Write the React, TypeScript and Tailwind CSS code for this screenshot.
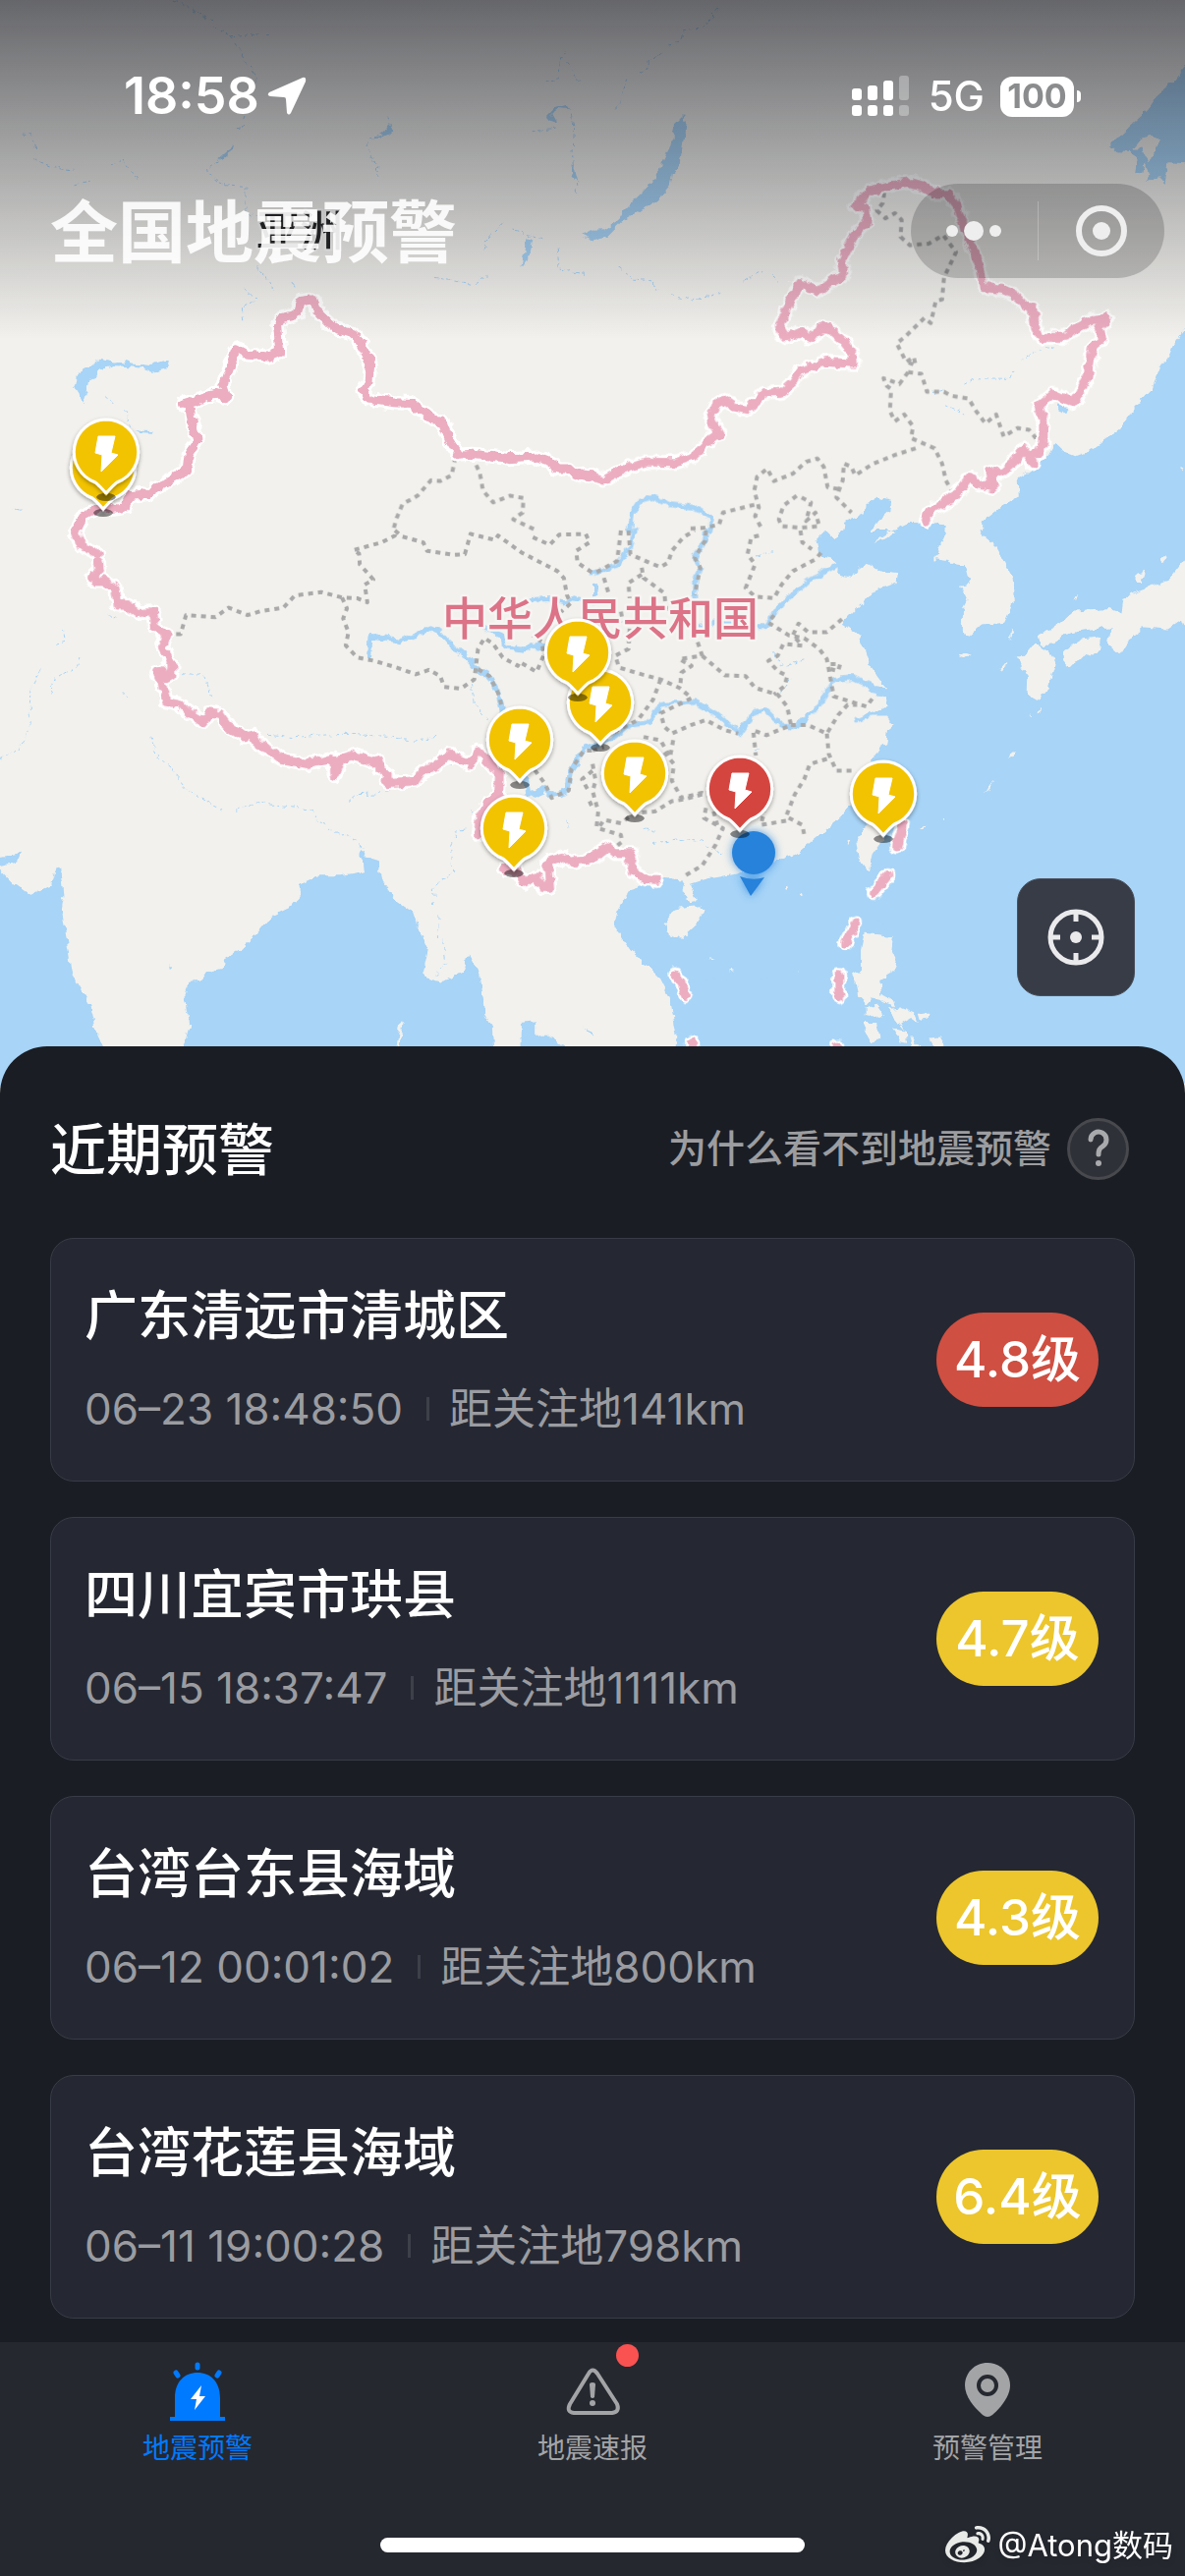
import { useState } from 'react'
import { FaWeibo } from 'react-icons/fa'

type Tile = {
  x: number
  y: number
  water: string[]
  islands: string[]
  rivers: string[]
  streams: string[]
  provinces: string[]
  border: string[]
}

// Each tile is drawn on its own 1568 x 1568 grid and scaled down to 603 x 540
const TILES: Tile[] = [
  {
    x: 0,
    y: 0,
    water: [
      'M197 1140 L205 1103 L230 1088 L262 1062 L300 1070 L325 1068 L350 1076 L400 1080 L420 1072 L450 1066 L446 1085 L405 1097 L360 1085 L300 1080 L265 1090 L255 1110 L235 1120 L230 1160 L222 1188 L205 1158Z',
      'M356 1270 L408 1272 L400 1280 L365 1277Z',
      'M622 428 L618 442 L590 465 L572 474 L596 450Z',
      'M1395 705 L1410 712 L1395 770 L1382 790 L1390 740Z',
      'M1568 680 L1540 692 L1568 708Z',
      'M1448 340 L1465 320 L1500 310 L1508 322 L1480 320 L1460 335 L1475 365 L1455 358Z',
      'M1508 482 L1522 500 L1530 540 L1515 515Z',
      'M1030 368 L1042 388 L1005 408 L975 412 L1010 400Z',
      'M35 1508 L58 1502 L48 1510Z',
    ],
    islands: [],
    rivers: [],
    streams: [
      'M460 0 L490 15 L525 40 L545 50 L575 85 L610 110 L635 150 L645 175 L665 200 L680 240',
      'M610 110 L660 103 L715 100',
      'M650 345 L640 375 L615 382',
      'M590 465 L545 500 L548 517 L600 545 L650 550 L650 620 L680 640',
      'M60 398 L85 400 L92 440 M90 470 L130 490 L195 503 M200 545 L240 538 M295 490 L325 470 L365 532',
      'M1030 345 L1038 380 L980 410 L970 435 L992 470 L998 495 L995 520',
      'M1495 148 L1482 185 L1480 235 L1440 240 M1500 185 L1535 238',
      'M1410 388 L1480 380 M1508 320 L1520 380 L1515 470 L1525 570',
      'M675 790 L700 815 L725 855 M645 855 L678 887 L640 910 L645 950 M775 840 L785 855',
      'M1150 820 L1250 840 L1290 815 M1280 735 L1300 690 L1330 660 M1360 680 L1435 708 M1475 740 L1480 795 L1550 812',
      'M275 1172 L300 1192 M330 1215 L345 1265',
    ],
    provinces: [
      'M1205 1352 L1195 1405 L1165 1422 L1140 1420 L1105 1465 L1065 1490 L1050 1530 L1040 1568',
      'M1250 1348 L1270 1400 L1278 1450 L1305 1485 L1350 1465 L1385 1472 L1383 1515 L1358 1535 L1420 1568',
    ],
    border: [
      'M200 1568 L210 1545 L220 1525 L250 1508 L275 1490 L300 1505 L330 1500 L345 1465 L390 1460 L440 1425 L495 1390 L500 1340 L522 1305 L508 1250 L503 1210 L485 1195 L570 1165 L600 1175 L590 1140 L610 1080 L625 1030 L655 1048 L710 1055 L740 1040 L735 960 L745 940 L785 930 L795 890 L830 885 L840 920 L885 970 L930 985 L950 1005 L980 1070 L975 1130 L962 1155 L975 1180 L1040 1190 L1090 1192 L1150 1240 L1170 1245 L1190 1300 L1215 1345 L1250 1342 L1350 1355 L1420 1350 L1455 1365 L1475 1385 L1500 1385 L1540 1405 L1568 1408',
    ],
  },
  {
    x: 603,
    y: 0,
    water: [
      'M242 340 L247 360 L240 420 L230 490 L210 510 L205 550 L175 590 L140 610 L110 635 L80 655 L40 700 L0 710 L0 682 L30 680 L65 655 L80 625 L130 570 L165 530 L185 480 L215 410 L215 370Z',
      'M1640 198 L1568 198 L1530 250 L1500 275 L1470 325 L1425 370 L1370 430 L1385 448 L1430 450 L1440 465 L1436 515 L1455 510 L1460 480 L1478 520 L1465 540 L1500 522 L1515 540 L1525 480 L1568 483 L1640 483Z',
      'M1640 975 L1568 970 L1540 1010 L1528 1045 L1505 1080 L1480 1150 L1420 1220 L1400 1265 L1370 1290 L1310 1335 L1280 1348 L1240 1330 L1222 1312 L1205 1345 L1170 1380 L1125 1415 L1128 1465 L1080 1500 L1030 1545 L1030 1568 L1640 1568Z',
      'M663 1568 L668 1545 L720 1515 L722 1490 L755 1468 L790 1478 L790 1505 L755 1540 L735 1568Z',
      'M790 1568 L830 1545 L880 1545 L935 1552 L935 1568Z',
      'M1230 1198 L1255 1205 L1243 1222 L1230 1212Z',
    ],
    islands: [
      'M1450 410 L1480 400 L1498 412 L1490 440 L1480 470 L1470 480 L1455 440 L1430 440Z',
      'M1556 1380 L1564 1382 L1558 1392Z',
    ],
    rivers: ['M100 1568 L105 1520 L130 1478 L160 1470 L205 1492 L270 1500 L315 1530 L312 1568'],
    streams: [
      'M335 30 L285 85 L240 92 L225 128 L205 130 M182 155 L152 182 L150 195 L115 215 M90 235 L75 300 L60 318',
      'M70 790 L110 825 L160 830 L168 860 M210 870 L265 888 L345 865 M400 830 L450 800 M475 815 L490 830',
      'M985 1135 L1010 1120 L1105 1122 L1115 1098 M1135 1065 L1180 1035 L1225 1028 L1240 1015',
      'M935 1195 L985 1225 M900 1160 L935 1152',
    ],
    provinces: [
      'M772 570 L768 600 L752 622 L775 645 L800 630 L818 650 L815 700 L840 725 L890 720 L928 695 L962 745 L930 820 L925 885 L908 890 L895 955 L878 940 L830 992 L805 1015 L830 1070 L850 1055 L855 1080 L828 1068',
      'M835 1100 L870 1105 L885 1158 L930 1158 L950 1170 L995 1178 L1015 1215 L1040 1252 L1068 1225 L1088 1290 L1125 1265 L1155 1270 L1180 1305 L1195 1298',
      'M835 1100 L812 1135 L770 1118 L778 1140 L790 1150 L787 1215 L800 1245 L825 1225 L848 1260 L843 1295 L905 1325 L925 1370 L935 1420 L950 1450',
      'M855 1325 L800 1345 L740 1372 L695 1405 L685 1380 L665 1370 L662 1420 L645 1470 L685 1515',
      'M650 1445 L622 1440 L612 1380 L595 1355 L565 1365 L530 1400 L480 1422 L462 1385 L435 1410 L428 1450 L440 1500 L430 1525 L450 1568',
      'M428 1492 L345 1515 L335 1550 L300 1560 L255 1562',
      'M540 1465 L505 1495 L493 1535 L500 1555 L550 1560 L600 1555 L590 1515 L565 1540 L578 1485 L545 1466',
    ],
    border: [
      'M0 1408 L30 1420 L75 1390 L140 1365 L220 1367 L265 1350 L300 1310 L335 1280 L312 1240 L330 1190 L350 1183 L375 1202 L410 1210 L455 1162 L500 1160 L530 1130 L550 1095 L580 1085 L620 1070 L690 1075 L688 1045 L665 1010 L640 985 L625 970 L600 970 L580 1000 L550 980 L512 998 L495 968 L510 920 L548 835 L600 860 L640 825 L665 815 L660 770 L690 700 L728 655 L722 615 L697 608 L730 565 L790 548 L845 540 L870 548 L905 572 L940 572 L965 610 L1000 720 L1025 790 L1035 850 L1085 855 L1115 870 L1145 905 L1165 910 L1172 970 L1185 997 L1250 997 L1270 975 L1325 945 L1362 940 L1340 970 L1350 1000 L1325 1025 L1310 1110 L1290 1160 L1275 1190 L1220 1165 L1180 1200 L1193 1240 L1193 1310 L1180 1340 L1160 1345 L1168 1370 L1140 1325 L1120 1360 L1085 1395 L1055 1395 L1062 1440 L1025 1432 L998 1410 L960 1465 L910 1500 L885 1520 L880 1540',
    ],
  },
  {
    x: 0,
    y: 540,
    water: [
      'M-60 1000 L0 1000 L40 1045 L80 1077 L135 1050 L150 995 L162 1000 L170 1075 L163 1120 L175 1200 L190 1310 L210 1350 L240 1405 L255 1480 L275 1530 L275 1640 L-60 1640Z',
      'M485 1568 L485 1530 L502 1460 L490 1370 L500 1335 L530 1332 L545 1305 L590 1295 L592 1268 L640 1235 L665 1210 L720 1140 L775 1110 L795 1080 L795 1045 L845 1020 L900 1020 L965 1008 L960 970 L950 960 L955 940 L970 965 L1000 975 L1015 1040 L1050 1095 L1095 1130 L1110 1180 L1133 1240 L1118 1320 L1170 1335 L1225 1300 L1238 1250 L1270 1310 L1285 1430 L1305 1470 L1315 1640 L485 1640Z',
      'M1375 1640 L1378 1455 L1415 1450 L1415 1495 L1450 1495 L1495 1525 L1500 1640Z',
      'M1540 1465 L1568 1485 L1568 1497Z',
      'M-40 960 L0 965 L60 952 L50 975 L0 988 L-40 985Z',
      'M450 1288 L458 1293 L452 1298Z',
    ],
    islands: ['M1060 1450 L1068 1455 L1055 1530 L1050 1520Z'],
    rivers: [
      'M977 370 L980 315 L1010 318 L1060 327 L1100 310 L1140 287 L1165 300 L1200 345 L1240 380 L1265 410 L1295 430 L1318 480 L1328 530',
      'M1390 735 L1395 770 L1420 782 L1440 762 L1460 785 L1500 770 L1510 710 L1550 640 L1568 640',
      'M1405 205 L1450 202 L1490 215 L1520 200 L1568 215',
      'M1280 285 L1330 310 L1335 345 L1385 352 L1410 340 L1445 345',
    ],
    streams: [
      'M105 410 L80 470 L78 580 L70 620 L30 660 L0 675',
      'M210 375 L205 400 L145 440 L135 485 M145 335 L172 325 L168 295 M285 250 L305 258',
      'M400 610 L410 660 L455 705 L490 755 L520 785 L595 832 M625 825 L680 803 L740 815 L825 825 L840 860 L890 890 L940 915 L960 940',
      'M710 605 L780 612 L830 605 L920 602 L1030 608 L1080 620 L1160 610',
      'M920 803 L945 780 L1000 778 L1050 758 M1115 740 L1138 715 L1190 690 L1220 695',
      'M1230 880 L1212 885 L1195 930 L1198 1010 L1165 1035 L1145 1060 L1148 1105 M1160 1140 L1158 1220 M1172 1215 L1180 1275 L1150 1325',
      'M485 420 L540 430 L560 490 M325 478 L340 492',
      'M1250 460 L1258 520 L1290 560 M1245 830 L1260 850 M1500 860 L1505 880',
    ],
    provinces: [
      'M440 306 L478 306 L492 250 L570 256 L605 228 L655 250 L690 238 L750 228 L780 192 L850 182 L905 198 L945 200 L972 212 L965 160 L988 145 L952 100 L950 68 L935 58 L1010 35 L1045 15 L1040 0',
      'M905 198 L918 230 L908 260 L922 300 L915 340 L945 375 L990 385 L1050 405 L1100 425 L1135 412 L1165 430 L1175 462 L1220 467 L1255 440 L1265 350 L1282 318 L1305 335 L1330 375 L1370 400 L1375 388 L1420 418 L1438 370 L1435 330 L1410 310',
      'M1045 0 L1065 18 L1120 35 L1130 60 L1200 72 L1230 70 L1245 10 L1310 28 L1318 15 L1380 65 L1475 120 L1492 140 L1500 190 L1510 215 L1485 240',
      'M1265 410 L1295 430 L1318 480 L1328 520',
      'M1410 20 L1455 42 L1480 12 L1550 10 L1560 35 L1525 60 L1528 95 L1568 125',
      'M1415 708 L1440 745 L1460 790 L1505 768 L1512 705 L1545 650 L1568 650 M1568 710 L1540 735 L1555 765 M1560 800 L1568 820',
    ],
    border: [
      'M200 0 L212 42',
      'M228 52 L256 68',
      'M260 92 L264 116',
      'M243 140 L250 130 L255 148 L272 148 L305 170 L312 218 L330 218 L365 243 L405 240 L410 285 L440 305 L430 345 L455 395 L455 425 L440 435 L430 412 L415 418 L430 460 L440 505 L475 512 L495 535 L540 565 L555 540 L580 545 L600 575 L645 610 L670 605 L685 635 L715 650 L745 675 L815 690 L880 675 L885 725 L905 675 L930 665 L990 685 L1002 680 L1005 705 L1025 720 L1025 745 L1100 740 L1120 708 L1150 698 L1190 662 L1245 690 L1265 650 L1300 690 L1322 720 L1320 780 L1290 805 L1270 850 L1265 900',
      'M1335 1000 L1370 1010 L1385 1040 L1420 1022 L1435 1055 L1455 1055 L1450 980 L1490 965 L1510 980 L1568 968',
    ],
  },
  {
    x: 603,
    y: 540,
    water: [
      'M618 0 L592 30 L600 70 L650 95 L648 130 L685 142 L700 120 L725 98 L760 120 L808 125 L805 152 L740 180 L720 210 L698 230 L660 275 L705 310 L720 350 L735 400 L778 465 L740 460 L700 445 L770 490 L780 515 L725 550 L780 550 L798 575 L780 590 L775 630 L762 640 L735 690 L700 740 L690 800 L650 850 L600 900 L540 955 L490 975 L440 985 L380 1015 L300 1030 L258 1045 L275 1095 L255 1100 L238 1060 L245 1035 L180 1030 L100 1060 L65 1125 L58 1170 L100 1240 L180 1325 L205 1380 L222 1490 L215 1640 L1640 1640 L1640 0Z',
      'M0 150 L18 165 L10 190 L0 195Z',
    ],
    islands: [
      'M618 0 L640 25 L655 0Z',
      'M935 0 L920 45 L905 85 L940 90 L960 100 L985 102 L998 160 L975 165 L992 205 L980 230 L980 300 L1000 310 L1030 280 L1090 272 L1115 210 L1112 140 L1070 50 L1020 0Z',
      'M1640 85 L1568 85 L1530 140 L1500 155 L1440 180 L1405 200 L1400 245 L1370 232 L1270 240 L1230 280 L1180 310 L1185 340 L1220 338 L1240 310 L1300 295 L1372 285 L1365 335 L1395 365 L1415 330 L1445 305 L1448 285 L1520 292 L1560 262 L1566 285 L1640 285Z',
      'M1180 340 L1165 340 L1140 375 L1120 375 L1140 410 L1150 440 L1148 485 L1180 505 L1190 480 L1205 470 L1225 390 L1205 355Z',
      'M1245 355 L1295 320 L1345 315 L1340 350 L1325 370 L1300 365 L1265 405 L1245 380Z',
      'M1440 128 L1462 118 L1450 160 L1438 160Z',
      'M1505 90 L1515 70 L1518 85 L1510 98Z',
      'M745 35 L775 12 L790 0 L800 5 L775 25Z',
      'M968 372 L985 358 L1003 365 L985 378Z',
      'M1104 325 L1108 292 L1113 300Z',
      'M1078 412 L1098 388 L1095 405Z',
      'M1176 545 L1180 522 L1185 520 L1184 540Z M1158 545 L1165 545 L1163 552Z M1104 678 L1110 655 L1122 655Z M1035 780 L1042 758 L1063 742 L1045 765Z M925 855 L930 850 L932 860Z M865 880 L885 870 L878 882Z M1270 205 L1285 192 L1280 208Z',
      'M675 910 L682 915 L676 928Z M512 1060 L518 1050 L520 1062Z M548 1075 L555 1070 L558 1080 L550 1084Z',
      'M725 870 L712 900 L698 930 L705 970 L730 1008 L740 960 L762 925 L790 860Z',
      'M190 1165 L215 1120 L250 1112 L290 1110 L293 1128 L275 1165 L235 1207 L195 1190Z',
      'M720 1190 L760 1195 L795 1200 L792 1240 L805 1270 L790 1310 L760 1330 L765 1370 L790 1385 L800 1410 L770 1398 L740 1380 L725 1400 L705 1378 L698 1330 L688 1308 L710 1308 L710 1240Z',
      'M722 1410 L755 1405 L770 1430 L740 1440 L722 1430Z M780 1415 L815 1410 L850 1425 L860 1455 L840 1440 L820 1455 L830 1480 L805 1445Z M862 1425 L888 1425 L886 1445 L868 1448Z M712 1455 L752 1455 L760 1500 L740 1515 L722 1480Z M790 1470 L830 1480 L835 1515 L815 1510 L805 1490Z M890 1500 L920 1497 L938 1530 L905 1530Z M838 1500 L848 1500 L865 1525 L850 1525Z M690 1530 L665 1548 L655 1560 L680 1545Z',
      'M312 1264 L320 1266 L314 1270Z M365 1300 L372 1304 L362 1308Z M545 1303 L550 1306 L546 1308Z',
    ],
    rivers: [
      'M-10 640 L60 610 L100 575 L145 570 L180 515 L215 508 L270 505 L330 545 L390 600 L430 535 L460 530 L500 575 L540 580 L560 555 L600 520 L640 440 L690 435 L775 480',
      'M300 0 L298 30 L270 80 L285 110 L270 150 L270 195',
      'M262 290 L330 268 L455 285 L500 215 L530 190 L570 150 L600 130 L650 100',
      'M112 0 L100 50 L65 105 L0 125',
      'M740 475 L780 485 M735 545 L700 560',
    ],
    streams: [
      'M480 365 L500 400 L560 380 M500 480 L530 430 M435 75 L480 60',
      'M160 925 L230 910 L290 920 L345 960 M140 880 L170 890',
      'M430 650 L440 640 M780 510 L820 520 M1120 590 L1135 570 M1095 632 L1100 650 M755 1150 L785 1170 M775 1070 L785 1100 M300 1330 L330 1320 L365 1335 M425 1330 L470 1315',
    ],
    provinces: [
      'M75 0 L65 90 L0 130 M95 0 L100 70 L150 95 L180 108 L200 95 L210 60 L240 20 L270 0',
      'M300 0 L298 30 L270 80 L285 110 L270 190 M130 110 L135 140 L190 185 L195 240',
      'M130 130 L95 155 L98 200 M30 140 L45 195 M75 240 L80 270',
      'M440 15 L420 20 L410 70 L430 100 L405 170 L430 195 L480 200 L500 160 L530 120 L590 85 L605 65',
      'M550 0 L555 35 L580 55 M480 250 L465 272 L520 310 L560 318 L600 350 L620 380 L630 440 L638 490 L725 520 L745 490',
      'M660 262 L620 300 L570 300 L545 275 L530 310 L555 340 L505 335 L490 370 L465 385 L490 415 L515 430 L508 460 L480 485',
      'M98 290 L95 350 L60 370 L70 405 L130 425 L180 440 L230 465 L262 495 L180 540 L190 580 L210 600 L260 575 L300 560 L350 590 L385 600',
      'M278 330 L290 370 L230 380 L262 400 L235 420 L232 460 M290 370 L350 428 L405 430 L430 465 L490 485 L515 520 L525 575 L460 605 L425 590 L432 665',
      'M180 440 L160 500 L120 560 L50 600 M630 395 L655 395 L650 415 L625 408',
      'M525 575 L570 575 L620 600 L650 545 L675 515 L700 515 M620 600 L625 660 L645 710 L690 710',
      'M620 675 L575 690 L560 735 L535 780 L512 845 L555 870 L562 910 M512 858 L445 870 L455 830',
      'M135 610 L180 620 L205 670 L215 610 M190 655 L215 690 L210 740 L235 790 L290 775 L320 790',
      'M290 780 L240 795 L210 800 L165 830 L110 835 L75 865 L30 855 L15 880 L45 890 L75 900 L78 920 L55 940',
      'M300 820 L295 850 L345 880 L325 930 L290 990 L245 1020 M0 690 L8 740 L0 770 L15 830 L10 880',
      'M0 650 L30 640 M320 830 L330 870',
    ],
    border: [
      'M0 968 L40 935 L60 955 L105 955 L100 980 L108 1010 L140 1030 L170 1032',
      'M820 868 L805 935',
      'M782 1020 L745 1070',
      'M696 1162 L670 1220',
      'M652 1315 L652 1378',
      'M218 1310 Q240 1340 246 1372',
      'M264 1512 L266 1560',
      'M649 1525 L649 1560',
    ],
  },
]

const PINS = [
  { x: 105, y: 476, color: '#f2c305' },
  { x: 108, y: 460, color: '#f2c305' },
  { x: 611, y: 715, color: '#f2c305' },
  { x: 588, y: 664, color: '#f2c305' },
  { x: 529, y: 753, color: '#f2c305' },
  { x: 523, y: 843, color: '#f2c305' },
  { x: 646, y: 787, color: '#f2c305' },
  { x: 753, y: 803, color: '#d5443f' },
  { x: 899, y: 808, color: '#f2c305' },
]

const WARNINGS = [
  { place: '广东清远市清城区', time: '06–23 18:48:50', distance: '距关注地141km', level: '4.8级', severe: true },
  { place: '四川宜宾市珙县', time: '06–15 18:37:47', distance: '距关注地1111km', level: '4.7级', severe: false },
  { place: '台湾台东县海域', time: '06–12 00:01:02', distance: '距关注地800km', level: '4.3级', severe: false },
  { place: '台湾花莲县海域', time: '06–11 19:00:28', distance: '距关注地798km', level: '6.4级', severe: false },
]

type LayerKey = 'water' | 'islands' | 'rivers' | 'streams' | 'provinces' | 'border'

function Layer({ name, ...style }: { name: LayerKey } & Omit<React.SVGProps<SVGGElement>, 'name'>) {
  return (
    <g fill="none" strokeLinejoin="round" strokeLinecap="round" {...style}>
      {TILES.map(tile => (
        <g key={`${tile.x}-${tile.y}`} transform={`translate(${tile.x} ${tile.y}) scale(0.38457 0.34439)`}>
          {tile[name].map(d => (
            <path key={d} d={d} vectorEffect="non-scaling-stroke" />
          ))}
        </g>
      ))}
    </g>
  )
}

function Pin({ x, y, color }: { x: number; y: number; color: string }) {
  return (
    <g transform={`translate(${x} ${y})`}>
      <path
        d="M0 -33 A33 33 0 0 1 11 31 Q8 33 0 42 Q-8 33 -11 31 A33 33 0 0 1 0 -33Z"
        fill={color}
        stroke="#fff"
        strokeWidth="3"
        strokeLinejoin="round"
        filter="url(#pin-shadow)"
      />
      <path d="M-10 46 Q-9 43 -3 42 L0 45 L3 42 Q9 43 10 46 Q8 50 0 50 Q-8 50 -10 46Z" fill="#000" opacity="0.45" />
      <path d="M-8 -16 H9 L5 1 L12 3 L-5 20 L-4 3 L-11 1Z" fill="#fff" stroke="#fff" strokeWidth="1" strokeLinejoin="round" />
    </g>
  )
}

function ChinaMap() {
  return (
    <svg
      className="absolute inset-0 h-full w-full bg-[#f2f1ed]"
      viewBox="0 0 1206 1113"
      preserveAspectRatio="xMidYMin slice"
      role="img"
      aria-label="全国地震预警地图"
    >
      <defs>
        <filter id="rough" x="-2%" y="-2%" width="104%" height="104%">
          <feTurbulence type="fractalNoise" baseFrequency="0.12" numOctaves="2" seed="4" />
          <feDisplacementMap in="SourceGraphic" scale="8" xChannelSelector="R" yChannelSelector="G" />
        </filter>
        <filter id="pin-shadow" x="-30%" y="-30%" width="160%" height="160%">
          <feDropShadow dx="0" dy="2" stdDeviation="2" floodOpacity="0.35" />
        </filter>
        <filter id="glow" x="-40%" y="-40%" width="180%" height="180%">
          <feDropShadow dx="0" dy="0" stdDeviation="4" floodColor="#2682da" floodOpacity="0.8" />
        </filter>
      </defs>

      <g filter="url(#rough)">
        <Layer name="water" fill="#a7d4f7" stroke="none" />
        <Layer name="islands" fill="#f2f1ed" stroke="none" />
        <Layer name="streams" stroke="#a7d4f7" strokeWidth="1" strokeDasharray="3 4" />
        <Layer name="rivers" stroke="#a7d4f7" strokeWidth="5" />
      </g>
      <Layer name="provinces" stroke="#a9a9a9" strokeWidth="4" strokeDasharray="5 5" strokeLinecap="butt" />
      <g filter="url(#rough)">
        <Layer name="border" stroke="#fff" strokeWidth="15" />
        <Layer name="border" stroke="#ecadc1" strokeWidth="9" />
      </g>

      <g strokeWidth="5" paintOrder="stroke" strokeLinejoin="round" className="font-['Noto_Sans_CJK_SC',sans-serif] font-medium">
        <text x="261" y="251" fontSize="44" fill="#222" stroke="#fff" strokeOpacity="0.5">
          亚洲
        </text>
        <text x="450" y="646" fontSize="46" fill="#dc7387" stroke="#f7f5f3">
          中华人民共和国
        </text>
      </g>

      <g fill="#2682da" filter="url(#glow)">
        <circle cx="767" cy="868" r="22" />
        <path d="M753 892 Q766 897 778 893 L764 912Z" />
      </g>
      {PINS.map(pin => (
        <Pin key={`${pin.x}-${pin.y}`} {...pin} />
      ))}
    </svg>
  )
}

function StatusBar() {
  return (
    <div className="relative flex h-[60px] items-center justify-between pr-[106px] pl-[126px] text-white">
      <div className="flex items-center gap-2">
        <span className="text-[52px] leading-[60px] font-semibold">18:58</span>
        <svg className="h-10 w-10" viewBox="0 0 40 40" fill="currentColor" aria-hidden="true">
          <path d="M36 1 Q40 0 39 5 L24 37 Q22 40 20 37 L19 23 Q19 21 17 21 L3 20 Q-1 19 2 16Z" />
        </svg>
      </div>
      <div className="flex items-center">
        <svg className="h-[42px] w-[58px]" viewBox="0 0 58 42" fill="currentColor" aria-hidden="true">
          <rect x="0" y="13" width="10" height="12" rx="3" />
          <rect x="16" y="10" width="10" height="15" rx="3" />
          <rect x="32" y="5" width="10" height="20" rx="3" />
          <rect x="48" y="0" width="10" height="25" rx="3" opacity="0.3" />
          <rect x="0" y="30" width="10" height="11" rx="3" />
          <rect x="16" y="30" width="10" height="11" rx="3" />
          <rect x="32" y="30" width="10" height="11" rx="3" />
          <rect x="48" y="30" width="10" height="11" rx="3" opacity="0.3" />
        </svg>
        <span className="ml-5 text-[42px] leading-[60px] font-medium">5G</span>
        <span className="ml-4 flex h-[41px] w-[75px] items-center justify-center rounded-xl bg-white text-[34px] leading-none font-bold text-[#8b8c8d]">
          100
        </span>
        <span className="ml-[3px] h-3 w-1 rounded-r-full bg-white" />
      </div>
    </div>
  )
}

function Capsule() {
  return (
    <div className="flex h-24 w-[258px] items-center rounded-full bg-black/18 text-[#eeeeee]">
      <button type="button" aria-label="更多" className="flex h-full flex-1 items-center justify-center gap-[6px]">
        <span className="size-3 rounded-full bg-current" />
        <span className="size-5 rounded-full bg-current" />
        <span className="size-3 rounded-full bg-current" />
      </button>
      <span className="h-[60px] w-px bg-white/25" />
      <button type="button" aria-label="关闭" className="flex h-full flex-1 items-center justify-center">
        <span className="flex size-[52px] items-center justify-center rounded-full border-[6px] border-current">
          <span className="size-[18px] rounded-full bg-current" />
        </span>
      </button>
    </div>
  )
}

function AlarmIcon() {
  return (
    <svg className="h-16 w-16" viewBox="0 0 64 64" fill="currentColor" aria-hidden="true">
      <path d="M9 56 V37 C9 20 19 11 32 11 C45 11 55 20 55 37 V56 H60 V60 H4 V56Z" />
      <path d="M32 3 V6 M10 11 L12 14 M54 11 L52 14" stroke="currentColor" strokeWidth="5" strokeLinecap="round" />
      <path d="M36 24 L25 38 H31 L29 49 L40 35 H34Z" fill="#fff" />
    </svg>
  )
}

function AlertIcon() {
  return (
    <svg className="h-16 w-16" viewBox="0 0 64 64" fill="none" stroke="currentColor" aria-hidden="true">
      <path d="M28 12 Q32 5 37 12 L57 43 Q60 51 52 52 H13 Q5 51 9 43Z" strokeWidth="4" strokeLinejoin="round" />
      <path d="M29 23 Q29 21 32 21 Q35 21 35 23 L34 36 Q32 38 30 36Z" fill="currentColor" stroke="none" />
      <circle cx="32" cy="42" r="3" fill="currentColor" stroke="none" />
    </svg>
  )
}

function PlaceIcon() {
  return (
    <svg className="h-16 w-16" viewBox="0 0 64 64" fill="currentColor" aria-hidden="true">
      <path d="M32 1 C45 1 55 11 55 24 C55 35 46 46 37 54 Q32 58 27 54 C18 46 9 35 9 24 C9 11 19 1 32 1Z" />
      <circle cx="32" cy="24" r="9" stroke="#25282f" strokeWidth="4" />
    </svg>
  )
}

const TABS = [
  { id: 'warning', label: '地震预警', Icon: AlarmIcon, dot: false },
  { id: 'report', label: '地震速报', Icon: AlertIcon, dot: true },
  { id: 'manage', label: '预警管理', Icon: PlaceIcon, dot: false },
]

export default function App() {
  const [tab, setTab] = useState('warning')

  return (
    <div className="flex min-h-screen flex-col bg-[#1a1d24] font-['Inter','Noto_Sans_CJK_SC',sans-serif]">
      <section className="relative flex h-[1113px] flex-col pt-[68px]">
        <ChinaMap />
        <div className="absolute inset-x-0 top-0 h-[345px] bg-linear-to-b from-[#1a1c24]/65 to-[#1a1c24]/0" />
        <StatusBar />
        <header className="relative mt-[59px] flex items-center justify-between pr-[21px] pl-[51px]">
          <h1 className="pt-1 text-[69px] leading-[92px] font-bold text-white/90">全国地震预警</h1>
          <Capsule />
        </header>
        <button
          type="button"
          aria-label="定位"
          className="relative mt-auto mr-[51px] mb-[99px] flex size-[120px] items-center justify-center self-end rounded-3xl border border-[#4a4f5a] bg-[#373c47] text-[#eaeaec]"
        >
          <svg className="size-[60px]" viewBox="0 0 60 60" fill="none" stroke="currentColor" strokeWidth="5" aria-hidden="true">
            <circle cx="30" cy="30" r="26" />
            <path d="M30 4 V14 M30 46 V56 M4 30 H14 M46 30 H56" />
            <circle cx="30" cy="30" r="6" fill="currentColor" stroke="none" />
          </svg>
        </button>
      </section>

      <main className="relative -mt-12 flex-1 rounded-t-[48px] bg-[#1a1d24] px-[51px] pt-[72px] pb-6">
        <div className="flex h-16 items-center justify-between pr-[6px]">
          <h2 className="pt-[3px] text-[57px] leading-16 font-medium text-white">近期预警</h2>
          <button type="button" className="flex items-center gap-4 text-[39px] font-medium text-[#9c9da0]">
            为什么看不到地震预警
            <span className="flex size-[63px] items-center justify-center rounded-full border-[3px] border-[#48494e] bg-[#2f3138] text-[#a9aaac]">
              <svg className="h-10 w-6" viewBox="0 0 24 40" fill="none" stroke="currentColor" strokeWidth="5" strokeLinecap="round" aria-hidden="true">
                <path d="M4 11 A8 8 0 1 1 16 18 Q12 20 12 26" />
                <circle cx="12" cy="35" r="3" fill="currentColor" stroke="none" />
              </svg>
            </span>
          </button>
        </div>

        <ul className="mt-[59px] flex flex-col gap-9">
          {WARNINGS.map(w => (
            <li
              key={w.time}
              className="flex h-[248px] items-center justify-between rounded-3xl border border-[#383c46] bg-[#252832] pr-9 pl-[34px]"
            >
              <div className="flex flex-col gap-7">
                <h3 className="text-[54px] leading-[72px] font-medium text-white">{w.place}</h3>
                <p className="flex items-center text-[44px] leading-[60px] text-[#9b9ca1]">
                  <time>{w.time}</time>
                  <span className="mr-5 ml-6 h-6 w-[3px] bg-[#3d4049]" />
                  <span>{w.distance}</span>
                </p>
              </div>
              <span
                className={`flex h-24 w-[165px] items-center justify-center rounded-full text-[51px] font-medium text-white ${
                  w.severe ? 'bg-[#cf4f42]' : 'bg-[#ecc62c]'
                }`}
              >
                {w.level}
              </span>
            </li>
          ))}
        </ul>
      </main>

      <footer className="relative bg-[#25282f]">
        <nav className="grid grid-cols-3">
          {TABS.map(({ id, label, Icon, dot }) => (
            <button
              key={id}
              type="button"
              onClick={() => setTab(id)}
              className={`flex flex-col items-center gap-[6px] pt-5 ${tab === id ? 'text-[#007aff]' : 'text-[#a3a4a6]'}`}
            >
              <span className="relative">
                <Icon />
                {dot && <span className="absolute -top-[18px] -right-[15px] size-[23px] rounded-full bg-[#fa5151]" />}
              </span>
              <span className="text-[28px] leading-9">{label}</span>
            </button>
          ))}
        </nav>
        <div className="mx-auto mt-[73px] h-[15px] w-[432px] rounded-full bg-white" />
        <div className="h-6" />
        <div className="absolute right-3 bottom-2 flex items-center gap-2 text-[31px] leading-10 text-white drop-shadow-md">
          <FaWeibo className="size-[46px] text-[#e8eae8]" aria-hidden="true" />
          @Atong数码
        </div>
      </footer>
    </div>
  )
}
